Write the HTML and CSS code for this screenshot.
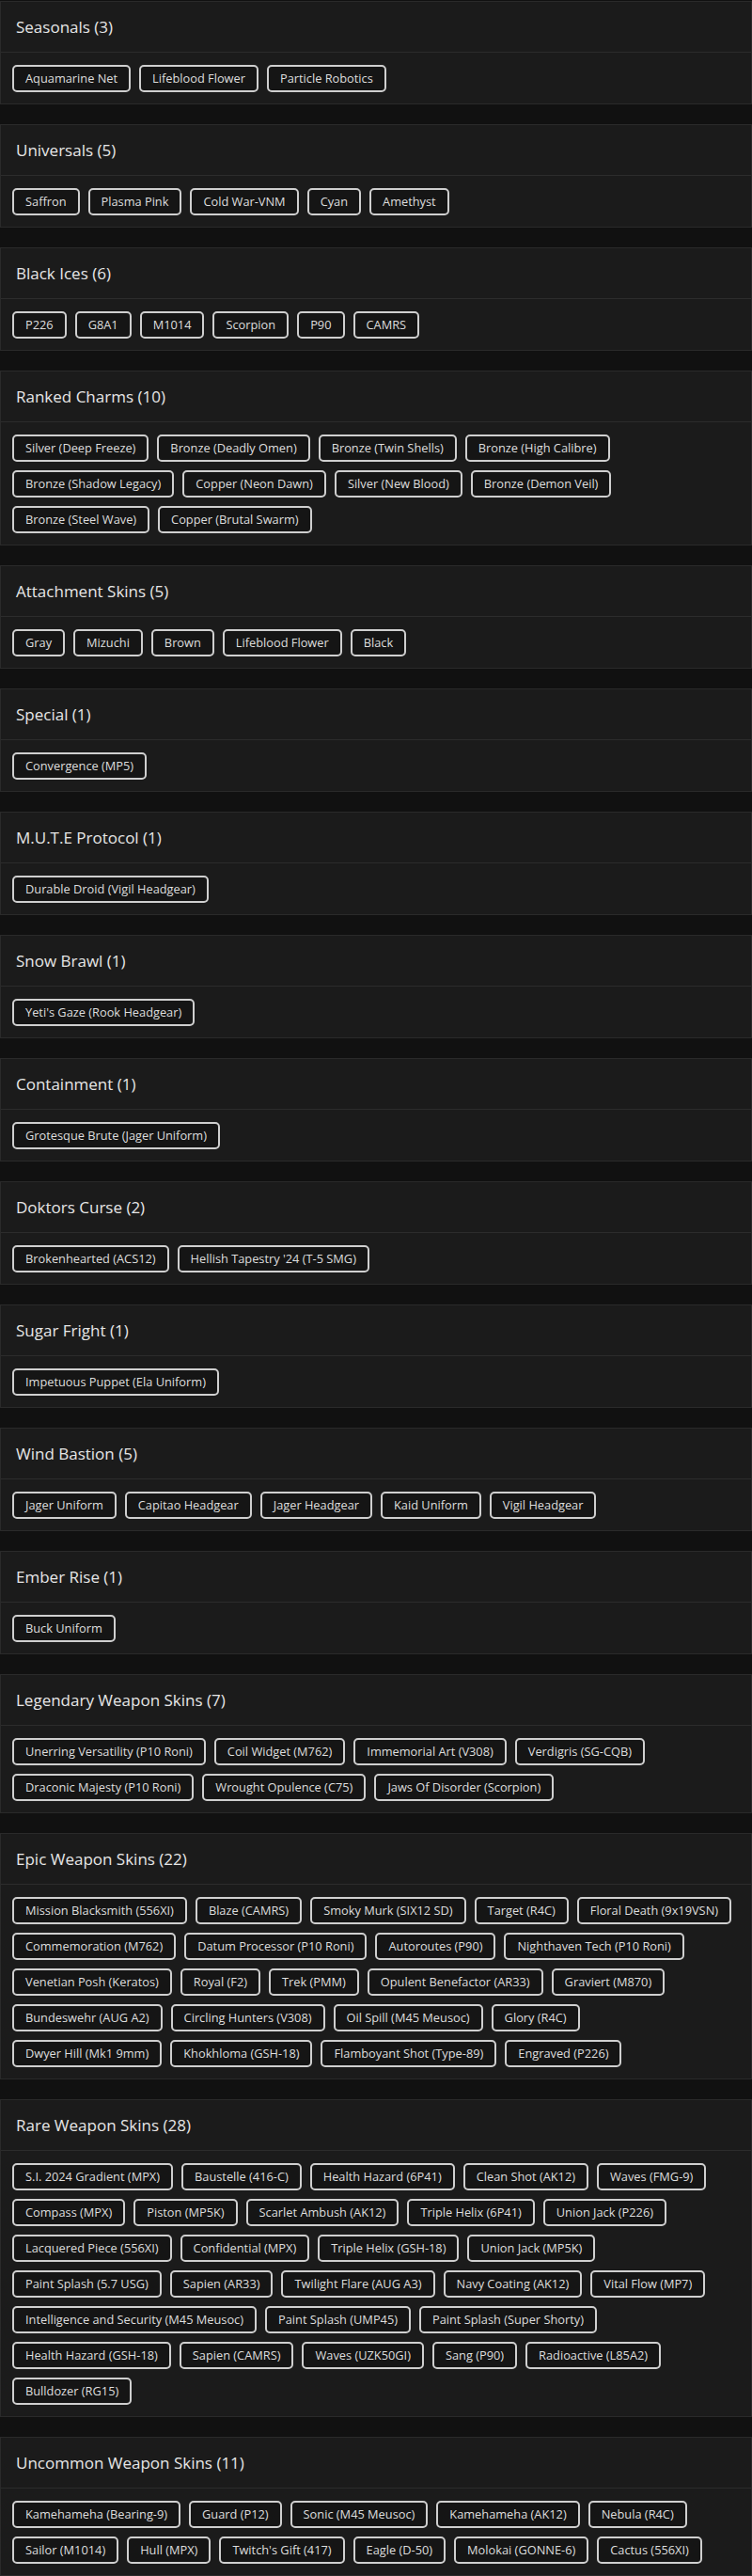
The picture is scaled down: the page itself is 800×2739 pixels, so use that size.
FILE: index.html
```html
<!DOCTYPE html>
<html lang="en">
<head>
  <meta charset="UTF-8" />
  <meta name="viewport" content="width=device-width, initial-scale=1.0"/>
  <title>Inventory | Skins</title>
  <link rel="stylesheet" href="styles.css">
</head>
<body>

  <div class="card">
    <div class="card-head"><h3>Seasonals (3)</h3></div>
    <div class="tags">
      <span class="tag">Aquamarine Net</span>
      <span class="tag">Lifeblood Flower</span>
      <span class="tag">Particle Robotics</span>
    </div>
  </div>

  <div class="card">
    <div class="card-head"><h3>Universals (5)</h3></div>
    <div class="tags">
      <span class="tag">Saffron</span>
      <span class="tag">Plasma Pink</span>
      <span class="tag">Cold War-VNM</span>
      <span class="tag">Cyan</span>
      <span class="tag">Amethyst</span>
    </div>
  </div>

  <div class="card">
    <div class="card-head"><h3>Black Ices (6)</h3></div>
    <div class="tags">
      <span class="tag">P226</span>
      <span class="tag">G8A1</span>
      <span class="tag">M1014</span>
      <span class="tag">Scorpion</span>
      <span class="tag">P90</span>
      <span class="tag">CAMRS</span>
    </div>
  </div>

  <div class="card">
    <div class="card-head"><h3>Ranked Charms (10)</h3></div>
    <div class="tags">
      <span class="tag">Silver (Deep Freeze)</span>
      <span class="tag">Bronze (Deadly Omen)</span>
      <span class="tag">Bronze (Twin Shells)</span>
      <span class="tag">Bronze (High Calibre)</span>
      <span class="tag">Bronze (Shadow Legacy)</span>
      <span class="tag">Copper (Neon Dawn)</span>
      <span class="tag">Silver (New Blood)</span>
      <span class="tag">Bronze (Demon Veil)</span>
      <span class="tag">Bronze (Steel Wave)</span>
      <span class="tag">Copper (Brutal Swarm)</span>
    </div>
  </div>

  <div class="card">
    <div class="card-head"><h3>Attachment Skins (5)</h3></div>
    <div class="tags">
      <span class="tag">Gray</span>
      <span class="tag">Mizuchi</span>
      <span class="tag">Brown</span>
      <span class="tag">Lifeblood Flower</span>
      <span class="tag">Black</span>
    </div>
  </div>

  <div class="card">
    <div class="card-head"><h3>Special (1)</h3></div>
    <div class="tags">
      <span class="tag">Convergence (MP5)</span>
    </div>
  </div>

  <div class="card">
    <div class="card-head"><h3>M.U.T.E Protocol (1)</h3></div>
    <div class="tags">
      <span class="tag">Durable Droid (Vigil Headgear)</span>
    </div>
  </div>

  <div class="card">
    <div class="card-head"><h3>Snow Brawl (1)</h3></div>
    <div class="tags">
      <span class="tag">Yeti's Gaze (Rook Headgear)</span>
    </div>
  </div>

  <div class="card">
    <div class="card-head"><h3>Containment (1)</h3></div>
    <div class="tags">
      <span class="tag">Grotesque Brute (Jager Uniform)</span>
    </div>
  </div>

  <div class="card">
    <div class="card-head"><h3>Doktors Curse (2)</h3></div>
    <div class="tags">
      <span class="tag">Brokenhearted (ACS12)</span>
      <span class="tag">Hellish Tapestry '24 (T-5 SMG)</span>
    </div>
  </div>

  <div class="card">
    <div class="card-head"><h3>Sugar Fright (1)</h3></div>
    <div class="tags">
      <span class="tag">Impetuous Puppet (Ela Uniform)</span>
    </div>
  </div>

  <div class="card">
    <div class="card-head"><h3>Wind Bastion (5)</h3></div>
    <div class="tags">
      <span class="tag">Jager Uniform</span>
      <span class="tag">Capitao Headgear</span>
      <span class="tag">Jager Headgear</span>
      <span class="tag">Kaid Uniform</span>
      <span class="tag">Vigil Headgear</span>
    </div>
  </div>

  <div class="card">
    <div class="card-head"><h3>Ember Rise (1)</h3></div>
    <div class="tags">
      <span class="tag">Buck Uniform</span>
    </div>
  </div>

  <div class="card">
    <div class="card-head"><h3>Legendary Weapon Skins (7)</h3></div>
    <div class="tags">
      <span class="tag">Unerring Versatility (P10 Roni)</span>
      <span class="tag">Coil Widget (M762)</span>
      <span class="tag">Immemorial Art (V308)</span>
      <span class="tag">Verdigris (SG-CQB)</span>
      <span class="tag">Draconic Majesty (P10 Roni)</span>
      <span class="tag">Wrought Opulence (C75)</span>
      <span class="tag">Jaws Of Disorder (Scorpion)</span>
    </div>
  </div>

  <div class="card">
    <div class="card-head"><h3>Epic Weapon Skins (22)</h3></div>
    <div class="tags">
      <span class="tag">Mission Blacksmith (556XI)</span>
      <span class="tag">Blaze (CAMRS)</span>
      <span class="tag">Smoky Murk (SIX12 SD)</span>
      <span class="tag">Target (R4C)</span>
      <span class="tag">Floral Death (9x19VSN)</span>
      <span class="tag">Commemoration (M762)</span>
      <span class="tag">Datum Processor (P10 Roni)</span>
      <span class="tag">Autoroutes (P90)</span>
      <span class="tag">Nighthaven Tech (P10 Roni)</span>
      <span class="tag">Venetian Posh (Keratos)</span>
      <span class="tag">Royal (F2)</span>
      <span class="tag">Trek (PMM)</span>
      <span class="tag">Opulent Benefactor (AR33)</span>
      <span class="tag">Graviert (M870)</span>
      <span class="tag">Bundeswehr (AUG A2)</span>
      <span class="tag">Circling Hunters (V308)</span>
      <span class="tag">Oil Spill (M45 Meusoc)</span>
      <span class="tag">Glory (R4C)</span>
      <span class="tag">Dwyer Hill (Mk1 9mm)</span>
      <span class="tag">Khokhloma (GSH-18)</span>
      <span class="tag">Flamboyant Shot (Type-89)</span>
      <span class="tag">Engraved (P226)</span>
    </div>
  </div>

  <div class="card">
    <div class="card-head"><h3>Rare Weapon Skins (28)</h3></div>
    <div class="tags">
      <span class="tag">S.I. 2024 Gradient (MPX)</span>
      <span class="tag">Baustelle (416-C)</span>
      <span class="tag">Health Hazard (6P41)</span>
      <span class="tag">Clean Shot (AK12)</span>
      <span class="tag">Waves (FMG-9)</span>
      <span class="tag">Compass (MPX)</span>
      <span class="tag">Piston (MP5K)</span>
      <span class="tag">Scarlet Ambush (AK12)</span>
      <span class="tag">Triple Helix (6P41)</span>
      <span class="tag">Union Jack (P226)</span>
      <span class="tag">Lacquered Piece (556XI)</span>
      <span class="tag">Confidential (MPX)</span>
      <span class="tag">Triple Helix (GSH-18)</span>
      <span class="tag">Union Jack (MP5K)</span>
      <span class="tag">Paint Splash (5.7 USG)</span>
      <span class="tag">Sapien (AR33)</span>
      <span class="tag">Twilight Flare (AUG A3)</span>
      <span class="tag">Navy Coating (AK12)</span>
      <span class="tag">Vital Flow (MP7)</span>
      <span class="tag">Intelligence and Security (M45 Meusoc)</span>
      <span class="tag">Paint Splash (UMP45)</span>
      <span class="tag">Paint Splash (Super Shorty)</span>
      <span class="tag">Health Hazard (GSH-18)</span>
      <span class="tag">Sapien (CAMRS)</span>
      <span class="tag">Waves (UZK50GI)</span>
      <span class="tag">Sang (P90)</span>
      <span class="tag">Radioactive (L85A2)</span>
      <span class="tag">Bulldozer (RG15)</span>
    </div>
  </div>

  <div class="card">
    <div class="card-head"><h3>Uncommon Weapon Skins (11)</h3></div>
    <div class="tags">
      <span class="tag">Kamehameha (Bearing-9)</span>
      <span class="tag">Guard (P12)</span>
      <span class="tag">Sonic (M45 Meusoc)</span>
      <span class="tag">Kamehameha (AK12)</span>
      <span class="tag">Nebula (R4C)</span>
      <span class="tag">Sailor (M1014)</span>
      <span class="tag">Hull (MPX)</span>
      <span class="tag">Twitch's Gift (417)</span>
      <span class="tag">Eagle (D-50)</span>
      <span class="tag">Molokai (GONNE-6)</span>
      <span class="tag">Cactus (556XI)</span>
    </div>
  </div>

</body>
</html>
```

FILE: styles.css
```css
body {
  font-family: 'Open Sans', 'Noto Sans', sans-serif;
  background-color: #111111;
  color: #e2e2e2;
  margin: 0;
  padding: 1px 0 0;
}

.card {
  background-color: #1b1b1b;
  border: 1px solid #2a2a2a;
  margin-bottom: 21px;
}

.card:last-child {
  margin-bottom: 0;
}

.card-head {
  padding: 15px 16px;
  border-bottom: 1px solid #2c2c2c;
}

.card-head h3 {
  margin: 0;
  font-size: 17px;
  font-weight: 500;
  line-height: 23px;
  color: #e6e6e6;
}

.tags {
  display: flex;
  flex-wrap: wrap;
  gap: 9px;
  padding: 13px 15px 12px 12px;
}

.tag {
  display: inline-block;
  font-size: 12.8px;
  line-height: 17px;
  padding: 4px 12px;
  border: 2px solid #cfcfcf;
  border-radius: 5px;
  background-color: #151515;
  color: #dedede;
  white-space: nowrap;
}
```
